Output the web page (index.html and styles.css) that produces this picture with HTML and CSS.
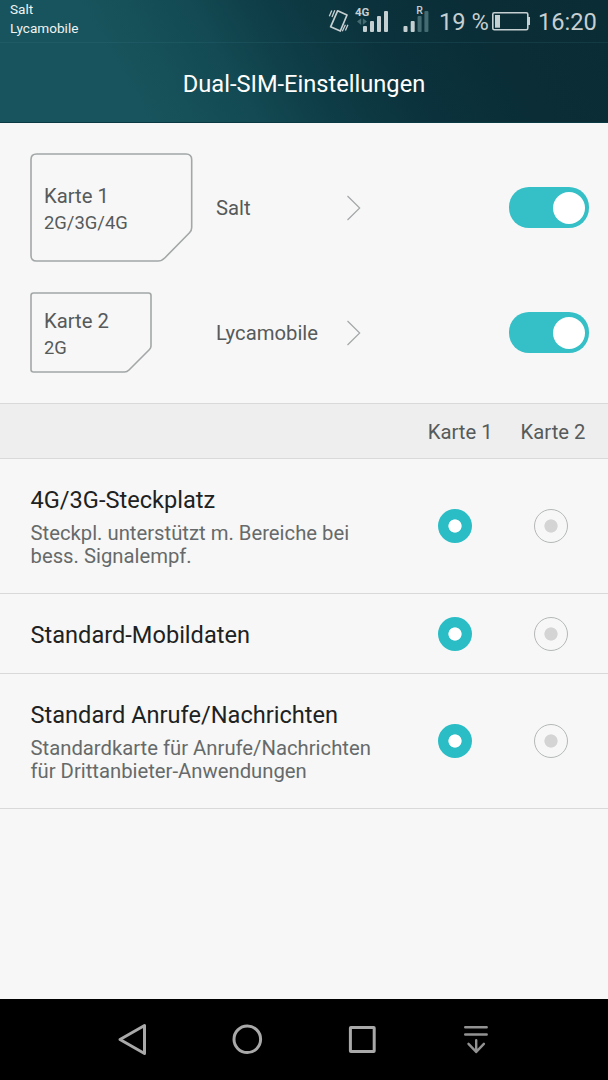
FILE: index.html
```html
<!DOCTYPE html>
<html lang="de">
<head>
<meta charset="utf-8">
<title>Dual-SIM-Einstellungen</title>
<link rel="stylesheet" href="styles.css">
</head>
<body>
<div class="screen">
  <header class="header">
    <div class="status">
      <div class="carriers"><div>Salt</div><div>Lycamobile</div></div>
      <div class="indicators">
        <svg class="radio-icons" width="102" height="42" viewBox="328 0 102 42">
          <g fill="none" stroke="#c6cfd1" stroke-width="1.7" stroke-linejoin="round">
            <path d="M337.6 10.8L347 15L340.3 31L330.6 26.8Z"/>
            <path d="M334.8 10.3L332 17M331.8 10.5L329.3 16.3M345.4 24.8L342.3 31.2M347.9 24.8L345.4 30.6" stroke-width="1.3"/>
          </g>
          <text class="tag" x="355" y="16">4G</text>
          <path d="M361.2 18.2V25L357 21.6ZM362.8 18.2V25L367 21.6Z" fill="#456b72"/>
          <g fill="#c6cfd1">
            <rect x="363" y="26" width="4" height="6" rx="1"/>
            <rect x="370" y="21" width="4" height="11" rx="1"/>
            <rect x="377" y="16" width="4" height="16" rx="1"/>
            <rect x="384" y="11" width="4" height="21" rx="1"/>
            <rect x="403.5" y="26" width="4" height="6" rx="1"/>
            <rect x="410.7" y="21" width="4" height="11" rx="1"/>
          </g>
          <g fill="#456b72">
            <rect x="417.6" y="16" width="4" height="16" rx="1"/>
            <rect x="424.4" y="11" width="4" height="21" rx="1"/>
          </g>
          <text class="tag roaming" x="416.2" y="14.2">R</text>
        </svg>
        <span class="percent">19 %</span>
        <svg class="battery" width="39" height="42" viewBox="491 0 39 42">
          <rect x="492.8" y="12.8" width="35" height="17" rx="1.5" fill="none" stroke="#c6cfd1" stroke-width="1.6"/>
          <rect x="528" y="17" width="2" height="8" fill="#c6cfd1"/>
          <rect x="495" y="15" width="5" height="12.7" fill="#c6cfd1"/>
        </svg>
        <span class="clock">16:20</span>
      </div>
    </div>
    <h1 class="title">Dual-SIM-Einstellungen</h1>
  </header>

  <main class="content">
    <section class="cards">
      <div class="card-row">
        <div class="sim sim-large">
          <svg class="outline" width="163" height="109" viewBox="0 0 163 109"><path d="M6.5 1H156Q161.7 1 161.7 6.7V74.5Q161.7 77.5 159.5 79.7L135 104.7Q131.7 108 128 108H6.5Q1 108 1 102.5V6.5Q1 1 6.5 1Z"/></svg>
          <span class="sim-name">Karte 1</span><span class="sim-type">2G/3G/4G</span>
        </div>
        <span class="operator">Salt</span>
        <svg class="chevron" width="16" height="26" viewBox="0 0 16 26"><path d="M1.5 1L13.7 13L1.5 25"/></svg>
        <span class="toggle"><span class="knob"></span></span>
      </div>
      <div class="card-row">
        <div class="sim sim-small">
          <svg class="outline" width="122" height="81" viewBox="0 0 122 81"><path d="M3.5 1H118.5Q121 1 121 3.5V54Q121 56 119.5 57.5L99 78Q97 80 94.5 80H3.5Q1 80 1 77.5V3.5Q1 1 3.5 1Z"/></svg>
          <span class="sim-name">Karte 2</span><span class="sim-type">2G</span>
        </div>
        <span class="operator">Lycamobile</span>
        <svg class="chevron" width="16" height="26" viewBox="0 0 16 26"><path d="M1.5 1L13.7 13L1.5 25"/></svg>
        <span class="toggle"><span class="knob"></span></span>
      </div>
    </section>

    <div class="columns"><span>Karte 1</span><span>Karte 2</span></div>

    <div class="option tall">
      <div class="label"><h2>4G/3G-Steckplatz</h2><p>Steckpl. unterstützt m. Bereiche bei<br>bess. Signalempf.</p></div>
      <span class="radio on"></span><span class="radio"></span>
    </div>
    <div class="option">
      <div class="label"><h2>Standard-Mobildaten</h2></div>
      <span class="radio on"></span><span class="radio"></span>
    </div>
    <div class="option tall">
      <div class="label"><h2>Standard Anrufe/Nachrichten</h2><p>Standardkarte für Anrufe/Nachrichten<br>für Drittanbieter-Anwendungen</p></div>
      <span class="radio on"></span><span class="radio"></span>
    </div>
  </main>

  <nav class="navbar">
    <svg width="32" height="36" viewBox="116 1021 32 36"><path d="M144.5 1025.5V1053.5L120 1039.5Z"/></svg>
    <svg width="32" height="36" viewBox="231.2 1021 32 36"><circle cx="247.5" cy="1039.3" r="13.3"/></svg>
    <svg width="32" height="36" viewBox="346 1021 32 36"><rect x="350.4" y="1027.4" width="23.8" height="24" rx=".5"/></svg>
    <svg class="pull" width="32" height="36" viewBox="460.3 1021 32 36"><path d="M465.5 1027.3H487M465.5 1034.5H487M476.5 1040.3V1052M468.8 1043.8L476.5 1051.8L484.2 1043.8"/></svg>
  </nav>
</div>
</body>
</html>
```
FILE: styles.css
```css
* { box-sizing: border-box; }
body { margin: 0; font-family: Roboto, "Liberation Sans", sans-serif; }
h1, h2, p { margin: 0; font-weight: 400; }
svg { display: block; flex: none; }

.screen { width: 608px; height: 1080px; display: flex; flex-direction: column; background: #f7f7f7; }

.header {
  height: 123px;
  color: #fff;
  background: linear-gradient(60deg, #18545d 0%, #18545d 22%, #134a53 38%, #0e3c46 50%, #0b333d 62%, #0a2d36 80%, #0a2c35 100%);
  border-bottom: 1px solid #0a3a44;
}
.status { height: 43px; display: flex; justify-content: space-between; border-bottom: 1px solid rgba(60, 130, 140, .18); }
.carriers { padding-left: 10px; font-size: 13.6px; line-height: 18.5px; color: #eef3f3; }
.indicators { display: flex; padding-right: 10px; color: #c6cfd1; font-size: 23.65px; line-height: 44px; }
.tag { font-size: 11.5px; font-weight: 700; fill: #c6cfd1; }
.roaming { font-size: 10.5px; font-weight: 500; }
.percent { width: 52px; margin-left: 9px; white-space: nowrap; }
.battery { margin-right: 8px; }
.clock { width: 60px; }
.title { font-size: 23.65px; line-height: 82px; text-align: center; }

.content { flex: 1; }
.cards { height: 280px; padding: 30px 19px 0 30px; display: flex; flex-direction: column; gap: 30px; }
.card-row { display: grid; grid-template-columns: 186px 130px 1fr 80px; align-items: center; color: #565a5a; font-size: 20.27px; }
.sim { position: relative; display: flex; flex-direction: column; justify-content: center; padding: 3px 0 0 14px; line-height: 27px; }
.sim-large { width: 162px; height: 109px; }
.sim-small { width: 122px; height: 81px; }
.sim-type { font-size: 18.4px; line-height: 25px; padding-bottom: 1px; }
.outline { position: absolute; top: 0; left: 0; fill: none; stroke: #a3a7a7; stroke-width: 1.6; }
.chevron { fill: none; stroke: #a3a7a7; stroke-width: 1.2; }
.toggle { display: flex; align-items: center; justify-content: flex-end; width: 80px; height: 41px; padding-right: 4px; border-radius: 20px; background: #35bfc6; }
.knob { width: 32px; height: 32px; border-radius: 50%; background: #fff; }

.columns { height: 56px; display: flex; justify-content: flex-end; gap: 28px; padding-right: 22.5px; background: #eee; border-top: 1px solid #d9d9d9; border-bottom: 1px solid #d9d9d9; font-size: 20.27px; line-height: 56px; color: #565a5a; }

.option { height: 80px; display: flex; align-items: center; gap: 62px; padding: 0 40.5px 0 30.5px; border-bottom: 1px solid #d9d9d9; }
.option.tall { height: 135px; }
.label { flex: 1; white-space: nowrap; }
.label h2 { font-size: 23.6px; line-height: 32px; color: #202222; padding-top: 2px; }
.tall .label h2 { padding-top: 0; }
.label p { font-size: 20.27px; line-height: 23px; color: #666a6a; padding-top: 6px; }
.radio { flex: none; width: 34px; height: 34px; border: 1px solid #b4b8b8; border-radius: 50%; background: radial-gradient(circle, #d4d4d4 6.2px, transparent 7px); }
.radio.on { border: 0; background: radial-gradient(circle, #fff 6.2px, #2abdc5 7px); }

.navbar { height: 81px; display: flex; justify-content: space-between; align-items: center; padding: 0 115.5px 1px 116px; background: #000; }
.navbar svg { fill: none; stroke: #a9a9a9; stroke-width: 3; stroke-linejoin: round; stroke-linecap: round; }
.navbar .pull { stroke: #929292; stroke-width: 2.4; }
```
